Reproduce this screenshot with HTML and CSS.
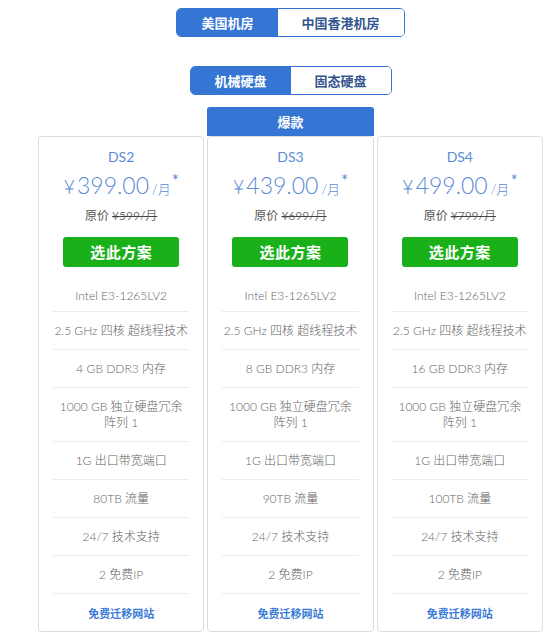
FILE: index.html
```html
<!DOCTYPE html>
<html lang="zh">
<head>
<meta charset="utf-8">
<title>Pricing</title>
<link rel="stylesheet" href="styles.css">
</head>
<body>
<div class="wrap">
  <div class="toggle toggle-top">
    <span class="seg active">美国机房</span>
    <span class="seg">中国香港机房</span>
  </div>
  <div class="toggle toggle-disk">
    <span class="seg active">机械硬盘</span>
    <span class="seg">固态硬盘</span>
  </div>
  <div class="plans">
    <div class="col">
      <div class="card">
        <div class="name">DS2</div>
        <div class="price"><span class="yen">¥</span>399.00<span class="unit">/月</span><span class="star">*</span></div>
        <div class="orig">原价 <s>¥599/月</s></div>
        <a class="btn">选此方案</a>
        <ul class="feats">
          <li>Intel E3-1265LV2</li>
          <li>2.5 GHz 四核 超线程技术</li>
          <li>4 GB DDR3 内存</li>
          <li>1000 GB 独立硬盘冗余<br>阵列 1</li>
          <li>1G 出口带宽端口</li>
          <li>80TB 流量</li>
          <li>24/7 技术支持</li>
          <li>2 免费IP</li>
          <li class="link">免费迁移网站</li>
        </ul>
      </div>
    </div>
    <div class="col">
      <div class="hot">爆款</div>
      <div class="card">
        <div class="name">DS3</div>
        <div class="price"><span class="yen">¥</span>439.00<span class="unit">/月</span><span class="star">*</span></div>
        <div class="orig">原价 <s>¥699/月</s></div>
        <a class="btn">选此方案</a>
        <ul class="feats">
          <li>Intel E3-1265LV2</li>
          <li>2.5 GHz 四核 超线程技术</li>
          <li>8 GB DDR3 内存</li>
          <li>1000 GB 独立硬盘冗余<br>阵列 1</li>
          <li>1G 出口带宽端口</li>
          <li>90TB 流量</li>
          <li>24/7 技术支持</li>
          <li>2 免费IP</li>
          <li class="link">免费迁移网站</li>
        </ul>
      </div>
    </div>
    <div class="col">
      <div class="card">
        <div class="name">DS4</div>
        <div class="price"><span class="yen">¥</span>499.00<span class="unit">/月</span><span class="star">*</span></div>
        <div class="orig">原价 <s>¥799/月</s></div>
        <a class="btn">选此方案</a>
        <ul class="feats">
          <li>Intel E3-1265LV2</li>
          <li>2.5 GHz 四核 超线程技术</li>
          <li>16 GB DDR3 内存</li>
          <li>1000 GB 独立硬盘冗余<br>阵列 1</li>
          <li>1G 出口带宽端口</li>
          <li>100TB 流量</li>
          <li>24/7 技术支持</li>
          <li>2 免费IP</li>
          <li class="link">免费迁移网站</li>
        </ul>
      </div>
    </div>
  </div>
</div>
</body>
</html>
```

FILE: styles.css
```css
* { box-sizing: border-box; }
html, body { margin: 0; padding: 0; background: #fff; }
body {
  font-family: "Lato", "Noto Sans CJK SC", sans-serif;
  color: #666;
  overflow: hidden;
}
.wrap {
  width: 505px;
  margin-left: 38px;
  padding-top: 8px;
  display: flex;
  flex-direction: column;
  align-items: center;
}
.toggle {
  display: flex;
  border: 1px solid #3575d3;
  border-radius: 5px;
  overflow: hidden;
  height: 29px;
}
.toggle-disk { margin-top: 29px; }
.seg {
  padding: 0 24px;
  line-height: 27px;
  font-size: 13px;
  font-weight: 700;
  color: #34558f;
  background: #fff;
  font-family: "Noto Sans CJK SC", sans-serif;
}
.seg.active { background: #3575d3; color: #fff; }
.toggle-disk .seg { width: 100px; padding: 0; text-align: center; }
.plans {
  margin-top: 12px;
  display: flex;
  gap: 3px;
  align-items: flex-end;
  width: 505px;
}
.col { width: 167px; display: flex; flex-direction: column; }
.hot {
  height: 29px;
  background: #3575d3;
  color: #fff;
  font-size: 13px;
  font-weight: 700;
  text-align: center;
  line-height: 29px;
  border-radius: 3px 3px 0 0;
  font-family: "Noto Sans CJK SC", sans-serif;
}
.card {
  border: 1px solid #dcdcdc;
  border-radius: 4px;
  padding: 10px 14px 0;
  text-align: center;
  height: 496px;
}
.name {
  font-size: 14px;
  line-height: 20px;
  color: #5c8bd6;
}
.price {
  margin-top: 3px;
  height: 30px;
  line-height: 30px;
  font-size: 23px;
  font-weight: 300;
  color: #5a8ad6;
}
.price .yen { font-size: 20px; margin-right: 2px; }
.price .unit { font-size: 13px; margin-left: 3px; }
.price .star {
  display: inline-block;
  font-size: 17px;
  line-height: 17px;
  vertical-align: top;
  position: relative;
  top: 2px;
  margin-left: 1px;
  font-weight: 400;
}
.orig {
  margin-top: 6px;
  line-height: 20px;
  font-size: 12px;
  color: #555;
}
.orig s { color: #777; text-decoration-color: #444; text-decoration-thickness: 1px; }
.btn {
  display: block;
  width: 116px;
  height: 30px;
  margin: 11px auto 0;
  background: #19b019;
  color: #fff;
  border-radius: 3px;
  font-size: 15px;
  font-weight: 700;
  line-height: 30px;
  font-family: "Noto Sans CJK SC", sans-serif;
  letter-spacing: 0.5px;
}
.feats {
  list-style: none;
  margin: 7px 0 0;
  padding: 0;
}
.feats li {
  font-size: 12px;
  line-height: 16px;
  padding: 11px 0 10px;
  border-bottom: 1px solid #ececec;
  color: #666;
  font-weight: 300;
}
.feats li:first-child { padding: 14px 0 7px; }
.feats li.link {
  border-bottom: none;
  color: #3a7bd5;
  font-weight: 700;
  font-size: 11px;
  font-family: "Noto Sans CJK SC", sans-serif;
}
```
